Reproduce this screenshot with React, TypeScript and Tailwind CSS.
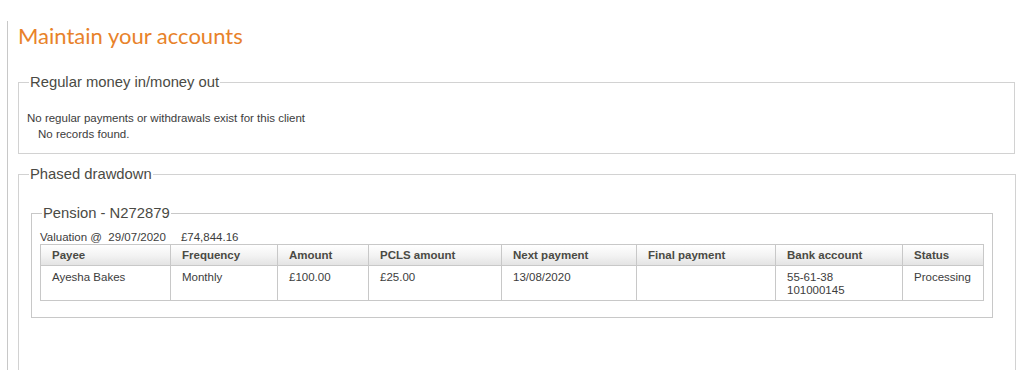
import React from "react";

interface Payment {
  payee: string;
  frequency: string;
  amount: string;
  pcls: string;
  nextPayment: string;
  finalPayment: string;
  bank: string[];
  status: string;
}

const columns = [
  { label: "Payee", width: "w-[130px]" },
  { label: "Frequency", width: "w-[107px]" },
  { label: "Amount", width: "w-[91px]" },
  { label: "PCLS amount", width: "w-[133px]" },
  { label: "Next payment", width: "w-[135px]" },
  { label: "Final payment", width: "w-[139px]" },
  { label: "Bank account", width: "w-[127px]" },
  { label: "Status", width: "w-[81px]" },
];

const payments: Payment[] = [
  {
    payee: "Ayesha Bakes",
    frequency: "Monthly",
    amount: "£100.00",
    pcls: "£25.00",
    nextPayment: "13/08/2020",
    finalPayment: "",
    bank: ["55-61-38", "101000145"],
    status: "Processing",
  },
];

const cell = "border border-[#c8c8c8] px-[11px] pt-[5px] align-top leading-[13px]";

export default function App() {
  return (
    <div className="h-[387px] w-full bg-white font-['Liberation_Sans',Arial,sans-serif] text-[#3c3c3c]">
      <div className="ml-[7px] pt-[21px]">
        <div className="h-[349px] overflow-hidden border-l border-[#c8c8c8] pl-[10px] pr-[10px]">
          <h1 className="pt-[1px] font-['Lato',sans-serif] text-[22px] leading-[28px] text-[#e8822a]">
            Maintain your accounts
          </h1>

          {/* regular money */}
          <fieldset className="mt-[24px] border border-[#d2d2d2] px-[10px] pb-[11px] pt-[19px]">
            <legend className="px-[1px] text-[14.8px] leading-[17px] text-[#4a4a44]">
              Regular money in/money out
            </legend>
            <p className="-ml-[2px] text-[11.5px] leading-[16px]">
              No regular payments or withdrawals exist for this client
            </p>
            <p className="ml-[9px] text-[11.5px] leading-[16px]">No records found.</p>
          </fieldset>

          {/* phased drawdown */}
          <fieldset className="mt-[12px] h-[260px] border border-[#d2d2d2] pl-[12px] pr-[22px] pt-[22px]">
            <legend className="ml-[-2px] px-[1px] text-[14.8px] leading-[17px] text-[#4a4a44]">
              Phased drawdown
            </legend>

            <fieldset className="border border-[#c8c8c8] px-[8px] pb-[16px] pt-[8px]">
              <legend className="ml-[2px] px-[1px] text-[14.8px] leading-[17px] text-[#4a4a44]">
                Pension - N272879
              </legend>
              <div className="flex h-[14px] items-center text-[11.5px] leading-[14px]">
                <span>Valuation @&nbsp; 29/07/2020</span>
                <span className="ml-[15px]">£74,844.16</span>
              </div>
              <table className="w-full table-fixed border-collapse border border-[#c8c8c8] text-[11.5px]">
                <colgroup>
                  {columns.map((c) => (
                    <col key={c.label} className={c.width} />
                  ))}
                </colgroup>
                <thead>
                  <tr className="bg-gradient-to-b from-white via-[#f3f3f3] to-[#e2e2e2]">
                    {columns.map((c) => (
                      <th
                        key={c.label}
                        className="h-[21px] border border-[#c8c8c8] px-[11px] text-left font-bold leading-[14px] text-[#4a4a44]"
                      >
                        {c.label}
                      </th>
                    ))}
                  </tr>
                </thead>
                <tbody>
                  {payments.map((p) => (
                    <tr key={p.payee}>
                      <td className={`h-[35px] ${cell}`}>{p.payee}</td>
                      <td className={cell}>{p.frequency}</td>
                      <td className={cell}>{p.amount}</td>
                      <td className={cell}>{p.pcls}</td>
                      <td className={cell}>{p.nextPayment}</td>
                      <td className={cell}>{p.finalPayment}</td>
                      <td className={cell}>
                        {p.bank.map((b) => (
                          <div key={b}>{b}</div>
                        ))}
                      </td>
                      <td className={cell}>{p.status}</td>
                    </tr>
                  ))}
                </tbody>
              </table>
            </fieldset>
          </fieldset>
        </div>
      </div>
    </div>
  );
}
